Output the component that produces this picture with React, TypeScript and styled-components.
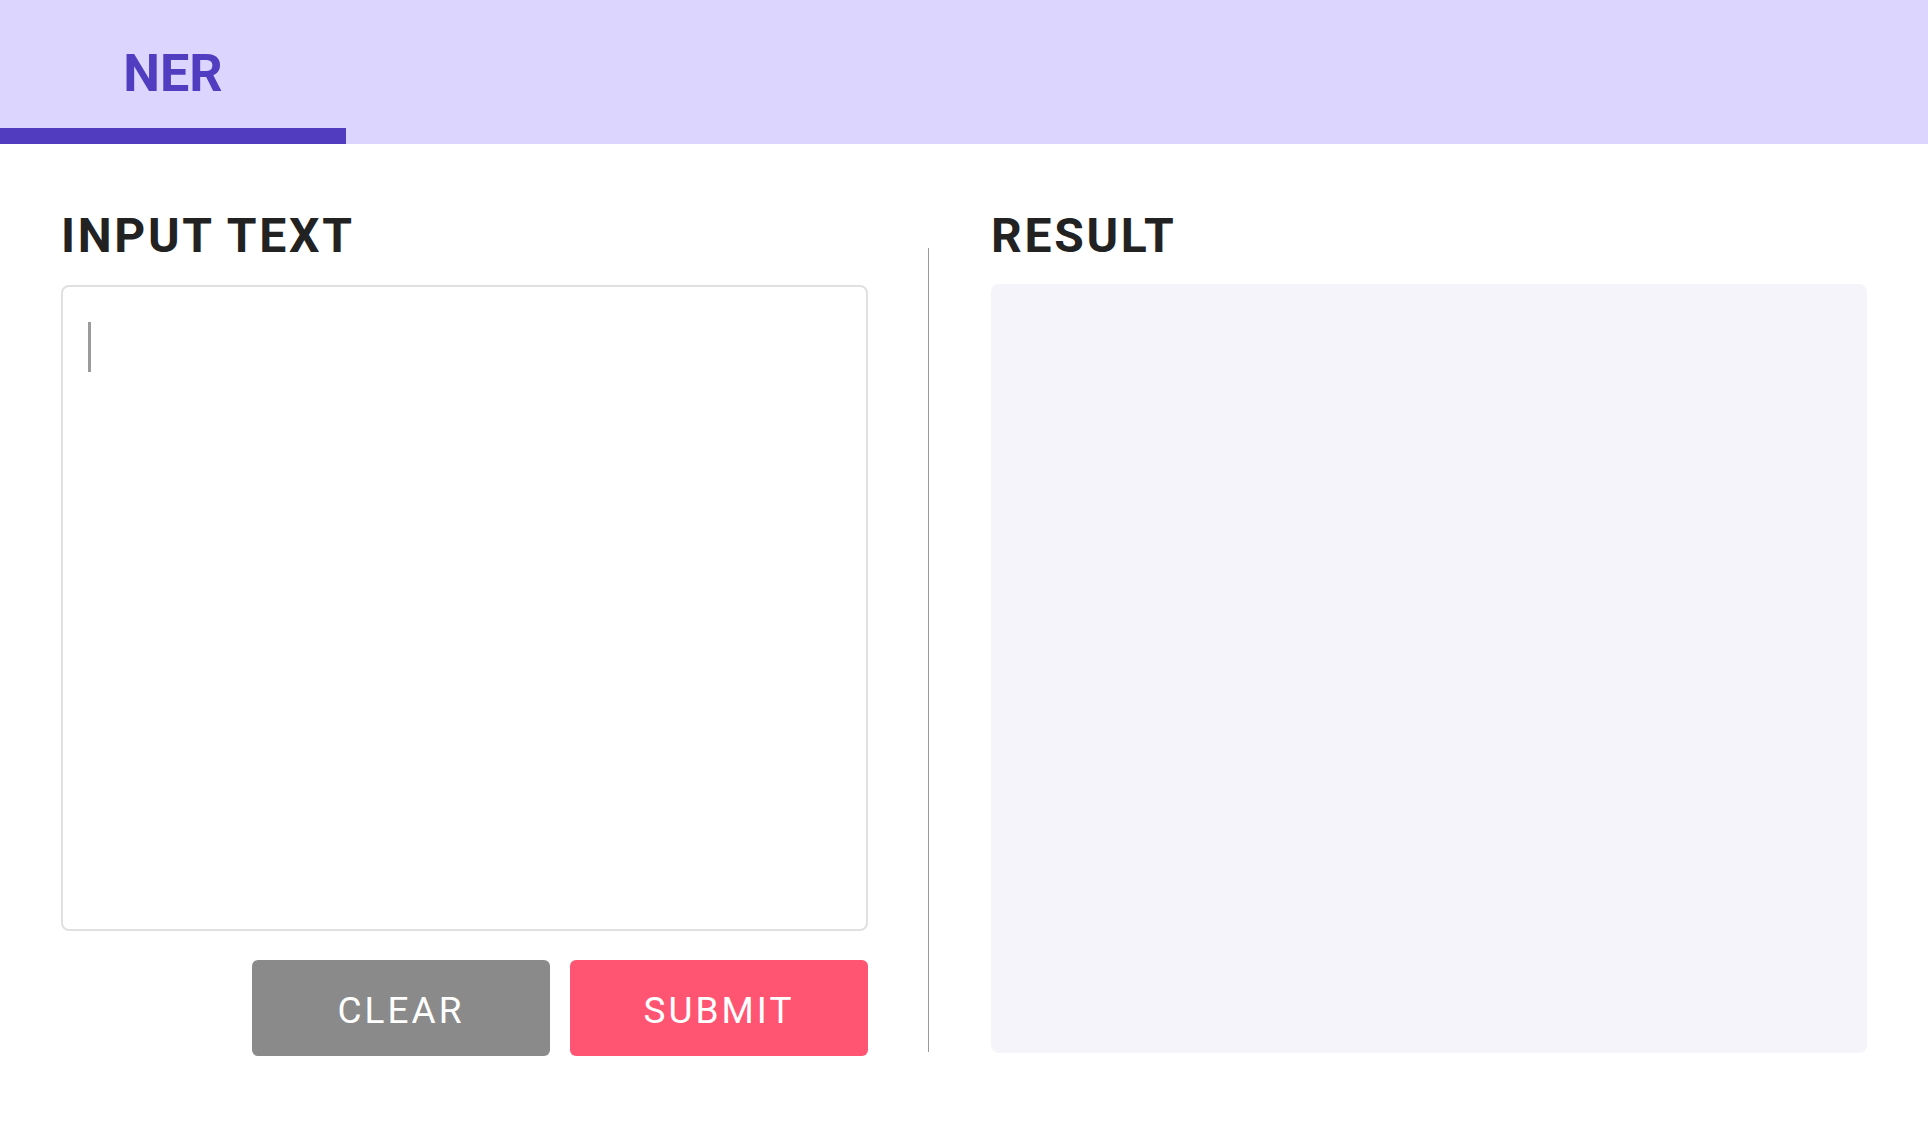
import React from "react";
import styled, { createGlobalStyle } from "styled-components";

const GlobalStyle = createGlobalStyle`
  html, body {
    margin: 0;
    padding: 0;
    background: #ffffff;
    font-family: Roboto, "Liberation Sans", Arial, sans-serif;
  }
  * { box-sizing: border-box; }
`;

const Header = styled.header`
  display: flex;
  height: 144px;
  background: #dcd6fe;
`;

const Tab = styled.div<{ $active?: boolean }>`
  width: 346px;
  height: 144px;
  padding-top: 48px;
  text-align: center;
  font-family: Roboto, "Liberation Sans", Arial, sans-serif;
  font-weight: 700;
  font-size: 52px;
  line-height: 52px;
  color: #503dc0;
  border-bottom: 16px solid ${(p) => (p.$active ? "#513cc0" : "transparent")};
  cursor: pointer;
`;

const Main = styled.main`
  display: flex;
  align-items: stretch;
  padding: 68px 61px;
`;

const Column = styled.section<{ $width: number }>`
  display: flex;
  flex-direction: column;
  width: ${(p) => p.$width}px;
  flex: none;
`;

const Heading = styled.h2`
  margin: 0;
  font-family: Roboto, "Liberation Sans", Arial, sans-serif;
  font-weight: 700;
  font-size: 48px;
  line-height: 48px;
  letter-spacing: 2.7px;
  color: #222222;
`;

const Divider = styled.div`
  flex: none;
  width: 1px;
  margin: 36px 62px 4px 60px;
  background: #9a9a9a;
`;

const InputWrap = styled.div`
  position: relative;
  margin-top: 25px;
  height: 646px;
`;

const TextArea = styled.textarea`
  display: block;
  width: 100%;
  height: 100%;
  resize: none;
  border: 2px solid #e0e0e0;
  border-radius: 8px;
  padding: 30px 25px;
  font-family: Roboto, "Liberation Sans", Arial, sans-serif;
  font-size: 40px;
  color: #222;
  outline: none;
  caret-color: transparent;
`;

const Caret = styled.span`
  position: absolute;
  left: 27px;
  top: 37px;
  width: 3px;
  height: 50px;
  background: #9b9b9b;
  pointer-events: none;
`;

const ButtonRow = styled.div`
  display: flex;
  justify-content: flex-end;
  gap: 20px;
  margin-top: 29px;
`;

const Button = styled.button<{ $variant: "clear" | "submit" }>`
  width: 298px;
  height: 96px;
  padding: 4px 0 0;
  border: none;
  border-radius: 6px;
  background: ${(p) => (p.$variant === "submit" ? "#ff5572" : "#8a8a8a")};
  color: #ffffff;
  font-family: Roboto, "Liberation Sans", Arial, sans-serif;
  font-weight: 400;
  font-size: 37px;
  letter-spacing: 3px;
  cursor: pointer;
`;

const ResultPanel = styled.div`
  margin-top: 24px;
  height: 769px;
  background: #f5f4fa;
  border-radius: 8px;
`;

export default function App() {
  return (
    <>
      <GlobalStyle />
      <Header>
        <Tab $active>NER</Tab>
      </Header>
      <Main>
        <Column $width={807}>
          <Heading>INPUT TEXT</Heading>
          <InputWrap>
            <TextArea aria-label="Input text" />
            <Caret />
          </InputWrap>
          <ButtonRow>
            <Button $variant="clear">CLEAR</Button>
            <Button $variant="submit">SUBMIT</Button>
          </ButtonRow>
        </Column>
        <Divider />
        <Column $width={876}>
          <Heading>RESULT</Heading>
          <ResultPanel />
        </Column>
      </Main>
    </>
  );
}
